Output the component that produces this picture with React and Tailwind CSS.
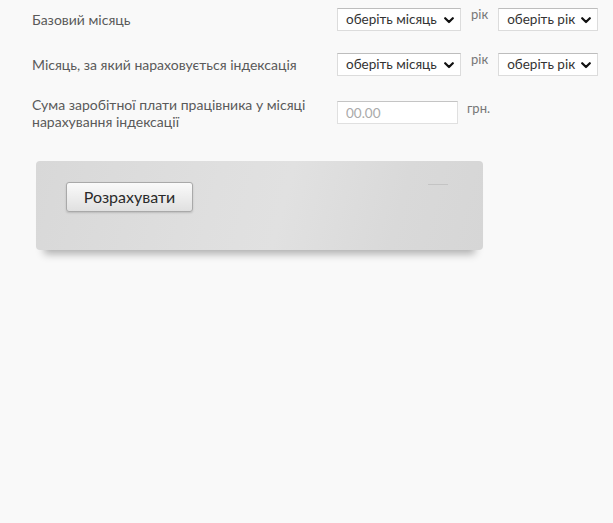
import { useState } from "react";

const months = [
  "січень", "лютий", "березень", "квітень", "травень", "червень",
  "липень", "серпень", "вересень", "жовтень", "листопад", "грудень",
];
const years = ["2015", "2016", "2017", "2018", "2019", "2020"];

const Chevron = () => (
  <svg width="10" height="7" viewBox="0 0 10 7" className="pointer-events-none absolute right-[7px] top-[9px]">
    <path d="M1.2 1.2 L5 5 L8.8 1.2" fill="none" stroke="#111" strokeWidth="2.2" strokeLinecap="round" strokeLinejoin="round" />
  </svg>
);

const Select = ({ placeholder, options, width }) => {
  const [value, setValue] = useState("");
  return (
    <div className={`relative ${width}`}>
      <select
        value={value}
        onChange={(e) => setValue(e.target.value)}
        className="block h-[23px] w-full appearance-none border border-[#dcdcdc] border-t-[#bdbdbd] bg-white pl-[8px] pr-[20px] text-[13.5px] leading-[21px] text-[#333] outline-none"
      >
        <option value="">{placeholder}</option>
        {options.map((o) => (
          <option key={o} value={o}>{o}</option>
        ))}
      </select>
      <Chevron />
    </div>
  );
};

const Period = () => (
  <div className="flex items-start">
    <Select placeholder="оберіть місяць" options={months} width="w-[124px]" />
    <span className="ml-[10px] mr-[10px] mt-[-2px] text-[13px] leading-[17px] text-[#777]">рік</span>
    <Select placeholder="оберіть рік" options={years} width="w-[100px]" />
  </div>
);

const App = () => {
  const [sum, setSum] = useState("");

  return (
    <div className="min-h-[523px] bg-[#f9f9f9] pl-[32px] pt-[8px] font-['Lato','Open_Sans',sans-serif] text-[#5a5a5a]">
      <div className="flex h-[23px] items-start">
        <div className="w-[305px] pt-[3px] text-[14px] leading-[17px]">Базовий місяць</div>
        <Period />
      </div>

      <div className="mt-[22px] flex h-[23px] items-start">
        <div className="w-[305px] pt-[3px] text-[14px] leading-[17px]">Місяць, за який нараховується індексація</div>
        <Period />
      </div>

      <div className="mt-[25px] flex h-[23px] items-start">
        <div className="mt-[-5px] w-[305px] text-[14px] leading-[17px]">
          Сума заробітної плати працівника у місяці
          <br />
          нарахування індексації
        </div>
        <input
          value={sum}
          onChange={(e) => setSum(e.target.value)}
          placeholder="00.00"
          className="h-[23px] w-[121px] border border-[#e0e0e0] border-t-[#c4c4c4] bg-white px-[8px] text-[13.5px] text-[#333] outline-none placeholder:text-[#aaa]"
        />
        <span className="ml-[9px] mt-[-1px] text-[13px] leading-[17px] text-[#777]">грн.</span>
      </div>

      <div className="ml-[4px] mt-[37px] w-[447px]">
        <div className="relative h-[89px] rounded-[4px] bg-[linear-gradient(105deg,#d8d8d8_0%,#dfdfdf_40%,#e1e1e1_55%,#d9d9d9_80%,#d6d6d6_100%)] pl-[30px] pt-[21px] shadow-[0_12px_8px_-8px_rgba(0,0,0,0.3)]">
          <button
            type="button"
            className="h-[30px] w-[127px] rounded-[3px] border border-[#a9a9a9] bg-[linear-gradient(#fafafa,#ececec_55%,#e0e0e0)] text-[16px] text-[#2a2a2a] shadow-[0_1px_2px_rgba(0,0,0,0.15)]"
          >
            Розрахувати
          </button>
          <div className="absolute left-[392px] top-[23px] h-px w-[20px] bg-[#c4c4c4]" />
        </div>
      </div>
    </div>
  );
};

export default App;
